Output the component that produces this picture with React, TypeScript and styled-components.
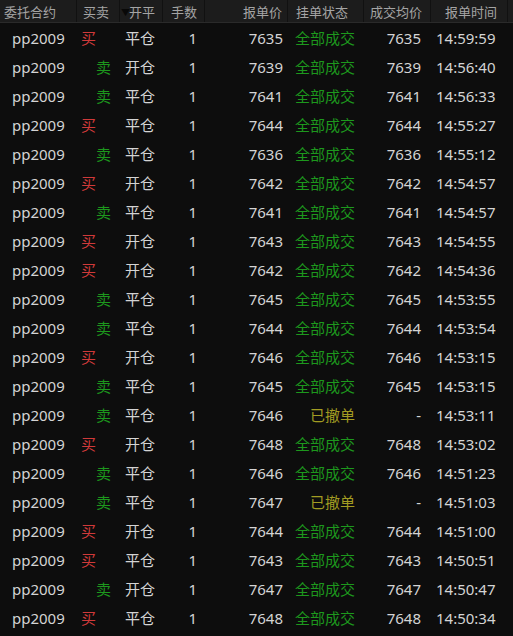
import React from 'react';
import styled, { createGlobalStyle } from 'styled-components';

const GlobalStyle = createGlobalStyle`
  html, body {
    margin: 0;
    padding: 0;
    background: #0d0d0d;
  }
  body {
    font-family: "Noto Sans", "Noto Sans CJK SC", sans-serif;
  }
`;

const COLS = '77px 43px 43px 42px 83px 76px 67px 77px 1fr';

const Table = styled.div`
  width: 513px;
  height: 636px;
  overflow: hidden;
  background: #0d0d0d;
`;

const HeaderRow = styled.div`
  display: grid;
  grid-template-columns: ${COLS};
  height: 22px;
  background: #1c1c1c;
  border-bottom: 1px solid #2a2a2a;
`;

const HeadCell = styled.div<{ $align?: 'left' | 'right'; $pad?: number }>`
  display: flex;
  align-items: center;
  justify-content: ${(p) => (p.$align === 'right' ? 'flex-end' : 'flex-start')};
  padding: 0 ${(p) => (p.$align === 'right' ? p.$pad ?? 5 : 0)}px 0
    ${(p) => (p.$align === 'right' ? 0 : p.$pad ?? 4)}px;
  border-right: 1px solid #111;
  font-family: "Noto Sans CJK SC", sans-serif;
  font-size: 13px;
  color: #a4a4a4;
  white-space: nowrap;
  &:last-child {
    border-right: none;
  }
`;

const SortArrow = styled.span`
  font-size: 9px;
  color: #080808;
  margin-left: -1px;
  margin-right: -1px;
  transform: translateY(1px);
`;

const Row = styled.div`
  display: grid;
  grid-template-columns: ${COLS};
  height: 29px;
  align-items: center;
  font-size: 15px;
  color: #d4d4d4;
`;

const Cell = styled.div<{ $align?: 'left' | 'right'; $pad?: number }>`
  display: flex;
  justify-content: ${(p) => (p.$align === 'right' ? 'flex-end' : 'flex-start')};
  padding-left: ${(p) => (p.$align === 'right' ? 0 : p.$pad ?? 0)}px;
  padding-right: ${(p) => (p.$align === 'right' ? p.$pad ?? 0 : 0)}px;
  white-space: nowrap;
`;

const Side = styled.div<{ $buy: boolean }>`
  display: flex;
  justify-content: ${(p) => (p.$buy ? 'flex-start' : 'flex-end')};
  padding: ${(p) => (p.$buy ? '0 0 0 4px' : '0 9px 0 0')};
  font-family: "Noto Sans CJK SC", sans-serif;
  color: ${(p) => (p.$buy ? '#d03a3a' : '#1d981d')};
`;

const Status = styled.div<{ $cancel: boolean }>`
  display: flex;
  justify-content: flex-end;
  padding-right: 9px;
  font-family: "Noto Sans CJK SC", sans-serif;
  color: ${(p) => (p.$cancel ? '#a29c22' : '#1d981d')};
`;

const Cjk = styled.span`
  font-family: "Noto Sans CJK SC", sans-serif;
`;

type Order = [boolean, string, number, number | null, string];

// [isBuy, openClose, price, avg (null = cancelled), time]
const orders: Order[] = [
  [true, '平仓', 7635, 7635, '14:59:59'],
  [false, '开仓', 7639, 7639, '14:56:40'],
  [false, '平仓', 7641, 7641, '14:56:33'],
  [true, '平仓', 7644, 7644, '14:55:27'],
  [false, '平仓', 7636, 7636, '14:55:12'],
  [true, '开仓', 7642, 7642, '14:54:57'],
  [false, '平仓', 7641, 7641, '14:54:57'],
  [true, '开仓', 7643, 7643, '14:54:55'],
  [true, '开仓', 7642, 7642, '14:54:36'],
  [false, '平仓', 7645, 7645, '14:53:55'],
  [false, '平仓', 7644, 7644, '14:53:54'],
  [true, '开仓', 7646, 7646, '14:53:15'],
  [false, '平仓', 7645, 7645, '14:53:15'],
  [false, '平仓', 7646, null, '14:53:11'],
  [true, '开仓', 7648, 7648, '14:53:02'],
  [false, '平仓', 7646, 7646, '14:51:23'],
  [false, '平仓', 7647, null, '14:51:03'],
  [true, '开仓', 7644, 7644, '14:51:00'],
  [true, '平仓', 7643, 7643, '14:50:51'],
  [false, '开仓', 7647, 7647, '14:50:47'],
  [true, '平仓', 7648, 7648, '14:50:34'],
];

const App: React.FC = () => {
  return (
    <>
      <GlobalStyle />
      <Table>
        <HeaderRow>
          <HeadCell $pad={4}>委托合约</HeadCell>
          <HeadCell $pad={6}>买卖</HeadCell>
          <HeadCell $pad={2}>
            <SortArrow>▼</SortArrow>开平
          </HeadCell>
          <HeadCell $pad={8}>手数</HeadCell>
          <HeadCell $align="right" $pad={5}>报单价</HeadCell>
          <HeadCell $pad={8}>挂单状态</HeadCell>
          <HeadCell $pad={6}>成交均价</HeadCell>
          <HeadCell $pad={14}>报单时间</HeadCell>
          <HeadCell />
        </HeaderRow>
        {orders.map(([buy, oc, price, avg, time], i) => (
          <Row key={i}>
            <Cell $pad={12}>pp2009</Cell>
            <Side $buy={buy}>{buy ? '买' : '卖'}</Side>
            <Cell $pad={5}>
              <Cjk>{oc}</Cjk>
            </Cell>
            <Cell $align="right" $pad={8}>1</Cell>
            <Cell $align="right" $pad={5}>{price}</Cell>
            <Status $cancel={avg === null}>{avg === null ? '已撤单' : '全部成交'}</Status>
            <Cell $align="right" $pad={10}>{avg === null ? '-' : avg}</Cell>
            <Cell $pad={5}>{time}</Cell>
            <Cell />
          </Row>
        ))}
      </Table>
    </>
  );
};

export default App;
